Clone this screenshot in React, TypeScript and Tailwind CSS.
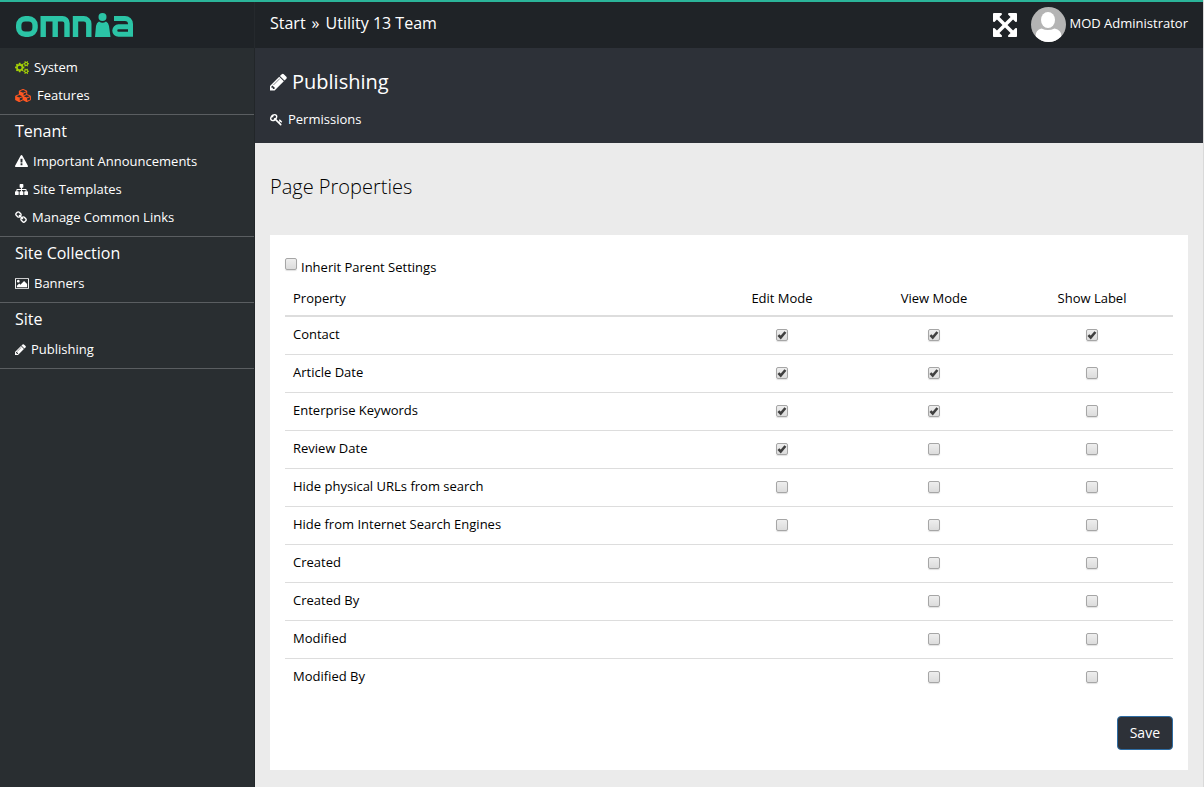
import { useState } from "react";
import type { ReactNode } from "react";

type Icon = { box: string; d: string };

const icons: Record<string, Icon> = {
  cogs: {
    box: "-64 0 1920 1792",
    d: "M832 896q0-106-75-181t-181-75-181 75-75 181 75 181 181 75 181-75 75-181zm768 512q0-52-38-90t-90-38-90 38-38 90q0 53 37.5 90.5t90.5 37.5 90.5-37.5 37.5-90.5zm0-1024q0-52-38-90t-90-38-90 38-38 90q0 53 37.5 90.5t90.5 37.5 90.5-37.5 37.5-90.5zm-384 421v185q0 10-7 19.5t-16 10.5l-155 24q-11 35-32 76 34 48 90 115 7 11 7 20 0 12-7 19-23 30-82.5 89.5t-78.5 59.5q-11 0-21-7l-115-90q-37 19-77 31-11 108-23 155-7 24-30 24h-186q-11 0-20-7.5t-10-17.5l-23-153q-34-10-75-31l-118 89q-7 7-20 7-11 0-21-8-144-133-144-160 0-9 7-19 10-14 41-53t47-61q-23-44-35-82l-152-24q-10-1-17-9.5t-7-19.5v-185q0-10 7-19.5t16-10.5l155-24q11-35 32-76-34-48-90-115-7-11-7-20 0-12 7-20 22-30 82-89t79-59q11 0 21 7l115 90q34-18 77-32 11-108 23-154 7-24 30-24h186q11 0 20 7.5t10 17.5l23 153q34 10 75 31l118-89q8-7 20-7 11 0 21 8 144 133 144 160 0 8-7 19-12 16-42 54t-45 60q23 48 34 82l152 23q10 2 17 10.5t7 19.5zm640 533v140q0 16-149 31-12 27-30 52 51 113 51 138 0 4-4 7-122 71-124 71-8 0-46-47t-52-68q-20 2-30 2t-30-2q-14 21-52 68t-46 47q-2 0-124-71-4-3-4-7 0-25 51-138-18-25-30-52-149-15-149-31v-140q0-16 149-31 13-29 30-52-51-113-51-138 0-4 4-7 4-2 35-20t59-34 30-16q8 0 46 46.5t52 67.5q20-2 30-2t30 2q51-71 92-112l6-2q4 0 124 70 4 3 4 7 0 25-51 138 17 23 30 52 149 15 149 31zm0-1024v140q0 16-149 31-12 27-30 52 51 113 51 138 0 4-4 7-122 71-124 71-8 0-46-47t-52-68q-20 2-30 2t-30-2q-14 21-52 68t-46 47q-2 0-124-71-4-3-4-7 0-25 51-138-18-25-30-52-149-15-149-31v-140q0-16 149-31 13-29 30-52-51-113-51-138 0-4 4-7 4-2 35-20t59-34 30-16q8 0 46 46.5t52 67.5q20-2 30-2t30 2q51-71 92-112l6-2q4 0 124 70 4 3 4 7 0 25-51 138 17 23 30 52 149 15 149 31z",
  },
  cubes: {
    box: "0 0 2304 1792",
    d: "M640 1632l384-192v-314l-384 164v342zm-64-454l404-173-404-173-404 173zm1088 454l384-192v-314l-384 164v342zm-64-454l404-173-404-173-404 173zm-448-293l384-165v-266l-384 164v267zm-64-379l441-189-441-189-441 189zm1088 518v416q0 36-19 67t-52 47l-448 224q-25 14-57 14t-57-14l-448-224q-4-2-7-4-2 2-7 4l-448 224q-25 14-57 14t-57-14l-448-224q-33-16-52-47t-19-67v-416q0-38 21.5-70t56.5-48l434-186v-400q0-38 21.5-70t56.5-48l448-192q23-10 50-10t50 10l448 192q35 16 56.5 48t21.5 70v400l434 186q36 16 57 48t21 70z",
  },
  warning: {
    box: "0 0 1792 1792",
    d: "M1024 1375v-190q0-14-9.5-23.5t-22.5-9.5h-192q-13 0-22.5 9.5t-9.5 23.5v190q0 14 9.5 23.5t22.5 9.5h192q13 0 22.5-9.5t9.5-23.5zm-2-374l18-459q0-12-10-19-13-11-24-11h-220q-11 0-24 11-10 7-10 21l17 457q0 10 10 16.5t24 6.5h185q14 0 23.5-6.5t10.5-16.5zm-14-934l768 1408q35 63-2 126-17 29-46.5 46t-63.5 17h-1536q-34 0-63.5-17t-46.5-46q-37-63-2-126l768-1408q17-31 47-49t65-18 65 18 47 49z",
  },
  sitemap: {
    box: "0 0 1792 1792",
    d: "M1792 1248v320q0 40-28 68t-68 28h-320q-40 0-68-28t-28-68v-320q0-40 28-68t68-28h96v-192h-512v192h96q40 0 68 28t28 68v320q0 40-28 68t-68 28h-320q-40 0-68-28t-28-68v-320q0-40 28-68t68-28h96v-192h-512v192h96q40 0 68 28t28 68v320q0 40-28 68t-68 28h-320q-40 0-68-28t-28-68v-320q0-40 28-68t68-28h96v-192q0-52 38-90t90-38h512v-192h-96q-40 0-68-28t-28-68v-320q0-40 28-68t68-28h320q40 0 68 28t28 68v320q0 40-28 68t-68 28h-96v192h512q52 0 90 38t38 90v192h96q40 0 68 28t28 68z",
  },
  link: {
    box: "64 0 1664 1792",
    d: "M1520 1216q0-40-28-68l-208-208q-28-28-68-28-42 0-72 32 3 3 19 18.5t21.5 21.5 15 19 13 25.5 3.5 27.5q0 40-28 68t-68 28q-15 0-27.5-3.5t-25.5-13-19-15-21.5-21.5-18.5-19q-33 31-33 73 0 40 28 68l206 207q27 27 68 27 40 0 68-26l147-146q28-28 28-67zm-703-705q0-40-28-68l-206-207q-28-28-68-28-39 0-68 27l-147 146q-28 28-28 67 0 40 28 68l208 208q27 27 68 27 42 0 72-31-3-3-19-18.5t-21.5-21.5-15-19-13-25.5-3.5-27.5q0-40 28-68t68-28q15 0 27.5 3.5t25.5 13 19 15 21.5 21.5 18.5 19q33-31 33-73zm895 705q0 120-85 203l-147 146q-83 83-203 83-121 0-204-85l-206-207q-83-83-83-203 0-123 88-209l-88-88q-86 88-208 88-120 0-204-84l-208-208q-84-84-84-204t85-203l147-146q83-83 203-83 121 0 204 85l206 207q83 83 83 203 0 123-88 209l88 88q86-88 208-88 120 0 204 84l208 208q84 84 84 204z",
  },
  image: {
    box: "-64 0 1920 1792",
    d: "M576 576q0 80-56 136t-136 56-136-56-56-136 56-136 136-56 136 56 56 136zm1024 384v448h-1408v-192l320-320 160 160 512-512zm96-704h-1600q-13 0-22.5 9.5t-9.5 22.5v1216q0 13 9.5 22.5t22.5 9.5h1600q13 0 22.5-9.5t9.5-22.5v-1216q0-13-9.5-22.5t-22.5-9.5zm160 32v1216q0 66-47 113t-113 47h-1600q-66 0-113-47t-47-113v-1216q0-66 47-113t113-47h1600q66 0 113 47t47 113z",
  },
  pencil: {
    box: "128 0 1536 1792",
    d: "M491 1536l91-91-235-235-91 91v107h128v128h107zm523-928q0-22-22-22-10 0-17 7l-542 542q-7 7-7 17 0 22 22 22 10 0 17-7l542-542q7-7 7-17zm-54-192l416 416-832 832h-416v-416zm683 96q0 53-37 90l-166 166-416-416 166-165q36-38 90-38 53 0 91 38l235 234q37 39 37 91z",
  },
  key: {
    box: "0 0 1792 1792",
    d: "M832 512q0-80-56-136t-136-56-136 56-56 136q0 42 19 83-41-19-83-19-80 0-136 56t-56 136 56 136 136 56 136-56 56-136q0-42-19-83 41 19 83 19 80 0 136-56t56-136zm851 704q0 17-49 66t-66 49q-9 0-28.5-16t-36.5-33-38.5-40-24.5-26l-96 96 220 220q28 28 28 68 0 42-39 81t-81 39q-40 0-68-28l-671-671q-176 131-365 131-163 0-265.5-102.5t-102.5-265.5q0-160 95-313t248-248 313-95q163 0 265.5 102.5t102.5 265.5q0 189-131 365l355 355 96-96q-3-3-26-24.5t-40-38.5-33-36.5-16-28.5q0-17 49-66t66-49q13 0 23 10 6 6 46 44.5t82 79.5 86.5 86 73 78 28.5 41z",
  },
  arrows: {
    box: "128 128 1536 1536",
    d: "M1411 541l-355 355 355 355 144-144q29-31 70-14 39 17 39 59v448q0 26-19 45t-45 19h-448q-42 0-59-40-17-39 14-69l144-144-355-355-355 355 144 144q31 30 14 69-17 40-59 40h-448q-26 0-45-19t-19-45v-448q0-42 40-59 39-17 69 14l144 144 355-355-355-355-144 144q-19 19-45 19-12 0-24-5-40-17-40-59v-448q0-26 19-45t45-19h448q42 0 59 40 17 39-14 69l-144 144 355 355 355-355-144-144q-31-30-14-69 17-40 59-40h448q26 0 45 19t19 45v448q0 42-39 59-13 5-25 5-26 0-45-19z",
  },
};

function Glyph({ name, className }: { name: string; className: string }) {
  return (
    <svg viewBox={icons[name].box} fill="currentColor" aria-hidden="true" className={`shrink-0 ${className}`}>
      <path d={icons[name].d} />
    </svg>
  );
}

function Logo() {
  return (
    <svg viewBox="0 0 118 25" role="img" aria-label="omnia" className="h-[25px] w-[118px]">
      <g fill="none" stroke="#2bc4a6" strokeWidth="5.4">
        <rect x="2.7" y="5.7" width="16.4" height="15.6" rx="6.5" />
        <path d="M27.2 24V5.7h19.300a4.500 4.500 0 0 1 4.500 4.500V24M39.200 5.700V24" />
        <path d="M59.500 24V5.700h8.300a5 5 0 0 1 5 5V24" />
        <path d="M98 5.500h11a5.500 5.500 0 0 1 5.500 5.500v10.300H102.500a3.700 3.700 0 0 1 0-7.500h12" strokeWidth="5" />
      </g>
      <g fill="#2bc4a6">
        <circle cx="86.5" cy="4" r="4" />
        <path d="M79 24l1-11q.5-3.500 3-4.500 3.500 2.500 7 0 2.500 1 3 4.500l1.500 11z" />
      </g>
    </svg>
  );
}

function NavItem({ icon, size, children }: { icon: string; size: string; children: ReactNode }) {
  return (
    <li>
      <a href="#" className="flex h-7 items-center gap-[5px]">
        <Glyph name={icon} className={size} />
        <span className="text-white">{children}</span>
      </a>
    </li>
  );
}

function NavGroup({ title, children }: { title?: string; children: ReactNode }) {
  return (
    <section className={`border-b border-[#5a5e61] px-[15px] pb-[5px] ${title ? "pt-1" : "pt-[5px]"}`}>
      {title && <h2 className="mb-1 text-base leading-6">{title}</h2>}
      <ul>{children}</ul>
    </section>
  );
}

function Check({ label, initial }: { label: string; initial: boolean }) {
  const [on, setOn] = useState(initial);
  return (
    <span className="inline-grid size-3 shrink-0 place-items-center">
      <input
        type="checkbox"
        aria-label={label}
        checked={on}
        onChange={() => setOn(!on)}
        className="col-start-1 row-start-1 m-0 size-3 appearance-none rounded-[2px] border border-[#a6a6a6] bg-linear-to-b from-[#eeeeee] to-[#dcdcdc] shadow-[0_1px_1px_rgba(0,0,0,0.12)]"
      />
      {on && (
        <svg viewBox="0 0 12 12" className="pointer-events-none z-10 col-start-1 row-start-1 size-3" aria-hidden="true">
          <path d="M2.4 6.200L4.700 8.500L9.400 3" fill="none" stroke="#404040" strokeWidth="2.6" />
        </svg>
      )}
    </span>
  );
}

const columns = ["Edit Mode", "View Mode", "Show Label"];

const rows: [string, (boolean | null)[]][] = [
  ["Contact", [true, true, true]],
  ["Article Date", [true, true, false]],
  ["Enterprise Keywords", [true, true, false]],
  ["Review Date", [true, false, false]],
  ["Hide physical URLs from search", [false, false, false]],
  ["Hide from Internet Search Engines", [false, false, false]],
  ["Created", [null, false, false]],
  ["Created By", [null, false, false]],
  ["Modified", [null, false, false]],
  ["Modified By", [null, false, false]],
];

export default function App() {
  return (
    <div className="border-r border-[#d9d9d9]">
      <div className="flex min-h-screen flex-col border-t-2 border-[#2bb59a] bg-[#ebebeb] font-['Open_Sans',sans-serif] text-[13px] leading-[18px] text-white">
        <header className="flex h-[46px] shrink-0 bg-[#1f2327]">
          <div className="w-[255px] shrink-0 border-r border-[#25292d] px-4 pt-[11px]">
            <a href="#" className="block">
              <Logo />
            </a>
          </div>
          <div className="flex min-w-0 flex-1 items-center justify-between px-[15px]">
            <nav aria-label="Breadcrumb" className="flex gap-[6px] pb-1 text-base leading-6">
              <a href="#">Start</a>
              <span>»</span>
              <a href="#">Utility 13 Team</a>
            </nav>
            <div className="flex items-center">
              <button type="button" aria-label="Full screen" className="mr-[14px]">
                <Glyph name="arrows" className="size-6" />
              </button>
              <a href="#" className="flex items-center gap-1 pb-[2px]">
                <svg viewBox="0 0 35 35" className="size-[35px] rounded-full" aria-hidden="true">
                  <rect width="35" height="35" fill="#b4b4b4" />
                  <ellipse cx="17" cy="13" rx="7" ry="8" fill="#fff" />
                  <path d="M4.500 35v-6q0-6 6-7.500 6.500 3 13 0 7 1.500 7 7.500v6z" fill="#fff" />
                </svg>
                <span className="pb-[2px]">MOD Administrator</span>
              </a>
            </div>
          </div>
        </header>
        <div className="flex flex-1">
          <aside className="w-[255px] shrink-0 border-r border-[#222629] bg-[#292e31]">
            <NavGroup>
              <NavItem icon="cogs" size="h-[13px] w-[14px] text-[#a4d007]">System</NavItem>
              <NavItem icon="cubes" size="h-[13px] w-[17px] text-[#ff5722]">Features</NavItem>
            </NavGroup>
            <NavGroup title="Tenant">
              <NavItem icon="warning" size="size-[13px]">Important Announcements</NavItem>
              <NavItem icon="sitemap" size="size-[13px]">Site Templates</NavItem>
              <NavItem icon="link" size="h-[13px] w-3">Manage Common Links</NavItem>
            </NavGroup>
            <NavGroup title="Site Collection">
              <NavItem icon="image" size="h-[13px] w-[14px]">Banners</NavItem>
            </NavGroup>
            <NavGroup title="Site">
              <NavItem icon="pencil" size="h-[13px] w-[11px]">Publishing</NavItem>
            </NavGroup>
          </aside>
          <main className="min-w-0 flex-1 text-black">
            <div className="h-[95px] bg-[#2d3138] px-[15px] pt-5 text-white">
              <h1 className="flex h-7 items-center gap-[5px] text-xl leading-7">
                <Glyph name="pencil" className="h-5 w-[17px]" />
                Publishing
              </h1>
              <a href="#" className="mt-[14px] flex w-fit items-center gap-[5px]">
                <Glyph name="key" className="size-[13px]" />
                Permissions
              </a>
            </div>
            <div className="px-[15px] pt-[30px] pb-[17px]">
              <h2 className="text-xl leading-7 font-light">Page Properties</h2>
              <form className="mt-[34px] bg-white px-[15px] pt-[23px] pb-5" onSubmit={(e) => e.preventDefault()}>
                <label className="flex w-fit items-start gap-1">
                  <Check label="Inherit Parent Settings" initial={false} />
                  <span>Inherit Parent Settings</span>
                </label>
                <table className="mt-1 w-full table-fixed border-collapse">
                  <colgroup>
                    <col />
                    <col className="w-[150px]" />
                    <col className="w-[154px]" />
                    <col className="w-[162px]" />
                  </colgroup>
                  <thead>
                    <tr className="h-9 border-b-2 border-[#dddddd]">
                      <th className="px-2 text-left font-normal">Property</th>
                      {columns.map((c) => (
                        <th key={c} className="px-2 text-center font-normal">{c}</th>
                      ))}
                    </tr>
                  </thead>
                  <tbody>
                    {rows.map(([name, states]) => (
                      <tr key={name} className="h-[38px] border-b border-[#dddddd] last:border-b-0">
                        <td className="px-2 pb-[2px]">{name}</td>
                        {states.map((s, i) => (
                          <td key={columns[i]} className="text-center">
                            {s !== null && (
                              <span className="flex justify-center">
                                <Check label={`${name}: ${columns[i]}`} initial={s} />
                              </span>
                            )}
                          </td>
                        ))}
                      </tr>
                    ))}
                  </tbody>
                </table>
                <div className="mt-5 flex justify-end">
                  <button type="submit" className="h-[34px] rounded border border-[#2e6da4] bg-[#2d3138] px-3 text-sm text-white">
                    Save
                  </button>
                </div>
              </form>
            </div>
          </main>
        </div>
      </div>
    </div>
  );
}
